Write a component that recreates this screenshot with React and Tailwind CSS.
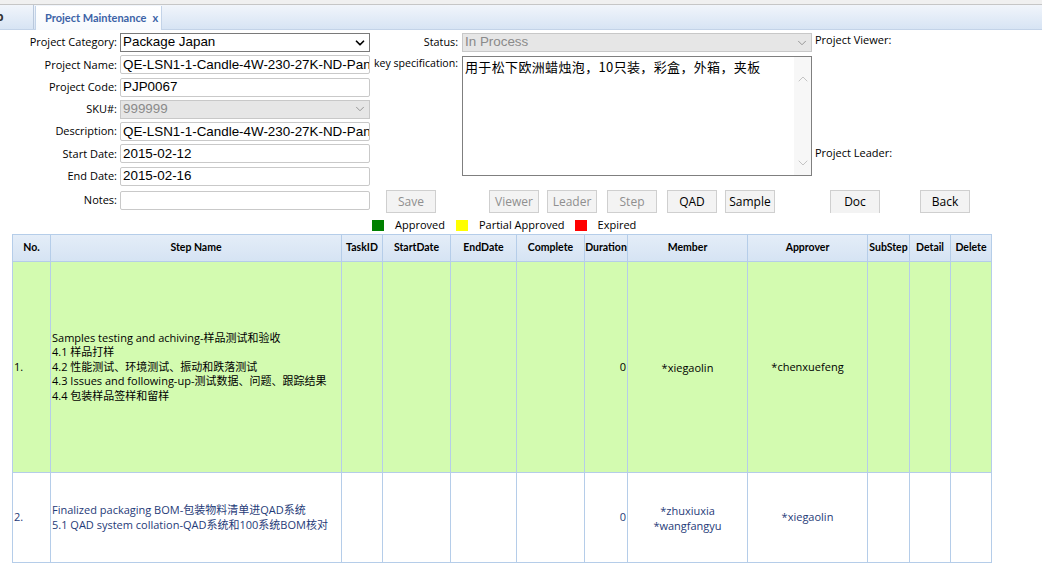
import { ChevronDown, ChevronUp } from 'lucide-react';

const font = { fontFamily: '"Open Sans", "Noto Sans CJK SC", sans-serif' };

function Field({ label, children }) {
    return (
        <div className="flex items-center h-[19px] mb-[3.3px]">
            <span className="w-[120px] pr-[3px] text-right text-[11px] text-black whitespace-nowrap">{label}</span>
            {children}
        </div>
    );
}

function TextBox({ value, disabled }) {
    return (
        <div className={`w-[250px] h-[19px] border rounded-[2px] px-[2px] flex items-center text-[13.4px] overflow-hidden whitespace-nowrap font-['Liberation_Sans',sans-serif] ${disabled ? 'bg-[#e6e6e6] border-[#c8c8c8] text-[#8a8a8a]' : 'bg-white border-[#c9c9c9] text-black'}`}>
            {value}
        </div>
    );
}

function Select({ value, disabled, width = 'w-[250px]' }) {
    return (
        <div className={`${width} h-[19px] border px-[2px] flex items-center justify-between text-[13.4px] whitespace-nowrap font-['Liberation_Sans',sans-serif] ${disabled ? 'bg-[#e6e6e6] border-[#c8c8c8] text-[#8a8a8a]' : 'bg-white border-[#7a7a7a] text-black'}`}>
            <span>{value}</span>
            <ChevronDown className={`w-[14px] h-[14px] ${disabled ? 'text-[#8a8a8a]' : 'text-black'}`} strokeWidth={disabled ? 1.5 : 3} />
        </div>
    );
}

function Btn({ label, disabled, className = '' }) {
    return (
        <div className={`h-[23px] w-[50px] border border-[#cfcfcf] bg-[#f3f3f3] flex items-center justify-center text-[12px] ${disabled ? 'text-[#8f8f8f]' : 'text-black'} ${className}`}>
            {label}
        </div>
    );
}

const cols = [
    { name: 'No.', w: 38 },
    { name: 'Step Name', w: 291 },
    { name: 'TaskID', w: 41 },
    { name: 'StartDate', w: 68 },
    { name: 'EndDate', w: 66 },
    { name: 'Complete', w: 68 },
    { name: 'Duration', w: 43 },
    { name: 'Member', w: 120 },
    { name: 'Approver', w: 120 },
    { name: 'SubStep', w: 42 },
    { name: 'Detail', w: 41 },
    { name: 'Delete', w: 41 },
];

const rows = [
    {
        no: '1.',
        bg: 'bg-[#d3fbb0]',
        color: 'text-black',
        h: 'h-[211px]',
        step: [
            'Samples testing and achiving-样品测试和验收',
            '4.1 样品打样',
            '4.2 性能测试、环境测试、振动和跌落测试',
            '4.3 Issues and following-up-测试数据、问题、跟踪结果',
            '4.4 包装样品签样和留样',
        ],
        duration: '0',
        member: ['*xiegaolin'],
        approver: ['*chenxuefeng'],
    },
    {
        no: '2.',
        bg: 'bg-white',
        color: 'text-[#1f3b78]',
        h: 'h-[90px]',
        step: [
            'Finalized packaging BOM-包装物料清单进QAD系统',
            '5.1 QAD system collation-QAD系统和100系统BOM核对',
        ],
        duration: '0',
        member: ['*zhuxiuxia', '*wangfangyu'],
        approver: ['*xiegaolin'],
    },
];

export default function App() {
    return (
        <div className="w-[1042px] h-[570px] bg-white overflow-hidden" style={font}>
            {/* top strip */}
            <div className="h-[5px] bg-[#f0f0f0] border-b border-[#c6c6c6]" />
            {/* tab bar */}
            <div className="h-[25px] bg-gradient-to-b from-[#f1f5fb] to-[#d7e4f4] border-b border-[#c3d3e8] flex items-end">
                <div className="h-[24px] w-[34px] flex items-center text-[12px] font-bold text-[#333] border-r border-[#b9c8dc] overflow-hidden">
                    <span className="-ml-[4px]">p</span>
                </div>
                <div className="h-[24px] ml-[1px] w-[127px] pl-[9px] bg-gradient-to-b from-white to-[#f6f9fd] border-l border-r border-[#c3d3e8] flex items-center text-[11px] font-bold text-[#3c63a7] -mb-[1px] whitespace-nowrap font-['Lato',sans-serif]">
                    Project Maintenance <span className="ml-[6px]">x</span>
                </div>
            </div>

            {/* form */}
            <div className="flex pt-[3px]">
                <div className="w-[370px] shrink-0">
                    <Field label="Project Category:"><Select value="Package Japan" /></Field>
                    <Field label="Project Name:"><TextBox value="QE-LSN1-1-Candle-4W-230-27K-ND-Pan" /></Field>
                    <Field label="Project Code:"><TextBox value="PJP0067" /></Field>
                    <Field label="SKU#:"><Select value="999999" disabled /></Field>
                    <Field label="Description:"><TextBox value="QE-LSN1-1-Candle-4W-230-27K-ND-Pan" /></Field>
                    <Field label="Start Date:"><TextBox value="2015-02-12" /></Field>
                    <Field label="End Date:"><TextBox value="2015-02-16" /></Field>
                    <div className="mt-[5px]"><Field label="Notes:"><TextBox value="" /></Field></div>
                </div>
                <div className="flex-1">
                    <div className="flex">
                        <div className="flex flex-col">
                            <div className="flex items-center h-[19px]">
                                <span className="w-[92px] pr-[4px] text-right text-[10.8px]">Status:</span>
                                <Select value="In Process" disabled width="w-[350px]" />
                            </div>
                            <div className="flex mt-[4px]">
                                <span className="w-[92px] pr-[4px] text-right text-[10.6px] leading-[14px] whitespace-nowrap">key specification:</span>
                                <div className="w-[350px] h-[120px] border border-[#7f7f7f] flex bg-white">
                                    <div className="flex-1 px-[2px] pt-[1px] text-[13px] leading-[17px] tracking-[0.35px] font-['Noto_Sans_CJK_SC',monospace] text-black">
                                        用于松下欧洲蜡烛泡，10只装，彩盒，外箱，夹板
                                    </div>
                                    <div className="w-[17px] bg-[#f7f7f7] flex flex-col justify-between items-center py-[4px]">
                                        <ChevronUp className="w-[16px] h-[16px] text-[#c4c4c4] mt-[10px]" strokeWidth={1.5} />
                                        <ChevronDown className="w-[16px] h-[16px] text-[#c4c4c4]" strokeWidth={1.5} />
                                    </div>
                                </div>
                            </div>
                        </div>
                        <div className="ml-[3px] flex flex-col text-[11px] -mt-[1px]">
                            <span>Project Viewer:</span>
                            <span className="mt-[96px]">Project Leader:</span>
                        </div>
                    </div>
                    <div className="flex mt-[14px]">
                        <Btn label="Save" disabled className="ml-[16px]" />
                        <Btn label="Viewer" disabled className="ml-[53px]" />
                        <Btn label="Leader" disabled className="ml-[8px]" />
                        <Btn label="Step" disabled className="ml-[10px] w-[46px]" />
                        <Btn label="QAD" className="ml-[10px]" />
                        <Btn label="Sample" className="ml-[8px]" />
                        <Btn label="Doc" className="ml-[55px] border-b-0" />
                        <Btn label="Back" className="ml-[40px]" />
                    </div>
                    <div className="flex items-center h-[18px] mt-[3px] text-[11px]">
                        <span className="ml-[2px] w-[12px] h-[11px] bg-[#008000]" />
                        <span className="ml-[11px]">Approved</span>
                        <span className="ml-[11px] w-[12px] h-[11px] bg-[#ffff00]" />
                        <span className="ml-[11px]">Partial Approved</span>
                        <span className="ml-[10px] w-[12px] h-[11px] bg-[#ff0000]" />
                        <span className="ml-[11px]">Expired</span>
                    </div>
                </div>
            </div>

            {/* table */}
            <table className="ml-[12px] border-collapse table-fixed w-[980px]">
                <colgroup>
                    {cols.map((c) => (
                        <col key={c.name} style={{ width: c.w }} />
                    ))}
                </colgroup>
                <thead>
                    <tr className="h-[27px] bg-gradient-to-b from-[#e4edf8] to-[#d5e3f3]">
                        {cols.map((c) => (
                            <th key={c.name} className="border border-[#b5cde9] text-[10.5px] font-bold text-black text-center px-0 whitespace-nowrap font-['Lato',sans-serif]">
                                {c.name}
                            </th>
                        ))}
                    </tr>
                </thead>
                <tbody>
                    {rows.map((r) => (
                        <tr key={r.no} className={`${r.bg} ${r.color} ${r.h} text-[11px]`}>
                            <td className="border border-[#b5cde9] pl-[1px] align-middle">{r.no}</td>
                            <td className="border border-[#b5cde9] pl-[1px] align-middle leading-[14.5px]">
                                {r.step.map((s, i) => (
                                    <div key={i} className="whitespace-nowrap">{s}</div>
                                ))}
                            </td>
                            <td className="border border-[#b5cde9]" />
                            <td className="border border-[#b5cde9]" />
                            <td className="border border-[#b5cde9]" />
                            <td className="border border-[#b5cde9]" />
                            <td className="border border-[#b5cde9] text-right pr-[1px]">{r.duration}</td>
                            <td className="border border-[#b5cde9] text-center leading-[15px]">
                                {r.member.map((m) => (
                                    <div key={m}>{m}</div>
                                ))}
                            </td>
                            <td className="border border-[#b5cde9] text-center">
                                {r.approver.map((m) => (
                                    <div key={m}>{m}</div>
                                ))}
                            </td>
                            <td className="border border-[#b5cde9]" />
                            <td className="border border-[#b5cde9]" />
                            <td className="border border-[#b5cde9]" />
                        </tr>
                    ))}
                </tbody>
            </table>
        </div>
    );
}
